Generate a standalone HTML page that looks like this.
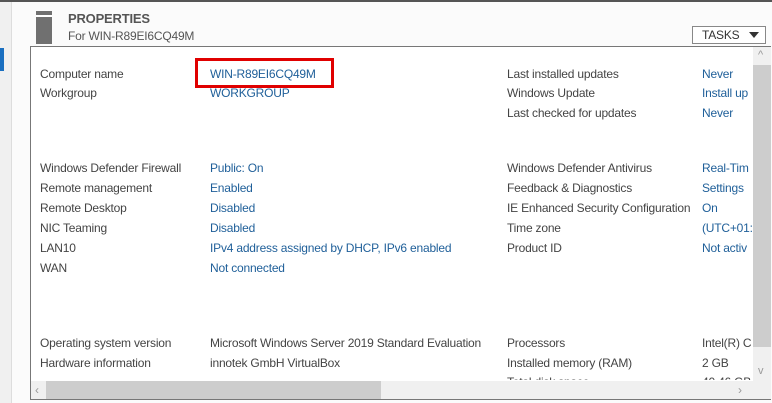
<!DOCTYPE html>
<html><head><style>
body{margin:0;width:772px;height:403px;overflow:hidden;background:#fbfbfb;font-family:"Liberation Sans",sans-serif;position:relative}
.t{position:absolute;font-size:12px;color:#444;white-space:nowrap;letter-spacing:-0.2px}
.v{color:#1f5f99}
</style></head><body>
<div style="position:absolute;left:0;top:0;width:772px;height:2px;background:#555"></div>
<div style="position:absolute;left:0;top:2px;width:11px;height:401px;background:#f0f0f0;border-right:1px solid #ddd"></div>
<div style="position:absolute;left:0;top:48px;width:4px;height:23px;background:#1a6fc0"></div>
<div style="position:absolute;left:36px;top:11px;width:16px;height:33px;background:#707070"></div>
<div style="position:absolute;left:36px;top:15px;width:16px;height:2px;background:#fff"></div>
<div class="t" style="left:68px;top:11px;font-size:13px;font-weight:bold;color:#555">PROPERTIES</div>
<div class="t" style="left:68px;top:29px;color:#555">For WIN-R89EI6CQ49M</div>
<div style="position:absolute;left:692px;top:26px;width:72px;height:16px;border:1px solid #888;background:#fff"></div>
<div class="t" style="left:702px;top:28px;color:#333">TASKS</div>
<div style="position:absolute;left:749px;top:32px;width:0;height:0;border-left:5px solid transparent;border-right:5px solid transparent;border-top:6px solid #333"></div>
<div style="position:absolute;left:30px;top:46px;width:740px;height:352px;border:1px solid #777;border-right:none;background:#fff;overflow:hidden">
 <div style="position:absolute;left:722px;top:0;width:18px;height:334px;background:#f0f0f0"></div>
 <div style="position:absolute;left:722px;top:18px;width:18px;height:282px;background:#cdcdcd"></div>
 <div class="t" style="left:727px;top:2px;color:#999;font-size:11px">^</div>
 <div class="t" style="left:727px;top:318px;color:#999;font-size:11px">v</div>
 <div style="position:absolute;left:0;top:334px;width:740px;height:18px;background:#f0f0f0"></div>
 <div style="position:absolute;left:15px;top:334px;width:335px;height:18px;background:#cdcdcd"></div>
 <div class="t" style="left:4px;top:336px;color:#999">‹</div>
 <div class="t" style="left:707px;top:336px;color:#999">›</div>
</div>
<div style="position:absolute;left:195px;top:58px;width:133px;height:24px;border:3px solid #e00000"></div>
<div class="t" style="left:40px;top:67px">Computer name</div><div class="t v" style="left:210px;top:67px">WIN-R89EI6CQ49M</div>
<div class="t" style="left:40px;top:86px">Workgroup</div><div class="t v" style="left:210px;top:86px">WORKGROUP</div>
<div class="t" style="left:507px;top:67px">Last installed updates</div><div class="t v" style="left:702px;top:67px">Never</div>
<div class="t" style="left:507px;top:86px">Windows Update</div><div class="t v" style="left:702px;top:86px">Install up</div>
<div class="t" style="left:507px;top:106px">Last checked for updates</div><div class="t v" style="left:702px;top:106px">Never</div>
<div class="t" style="left:40px;top:161px">Windows Defender Firewall</div><div class="t v" style="left:210px;top:161px">Public: On</div>
<div class="t" style="left:40px;top:181px">Remote management</div><div class="t v" style="left:210px;top:181px">Enabled</div>
<div class="t" style="left:40px;top:201px">Remote Desktop</div><div class="t v" style="left:210px;top:201px">Disabled</div>
<div class="t" style="left:40px;top:221px">NIC Teaming</div><div class="t v" style="left:210px;top:221px">Disabled</div>
<div class="t" style="left:40px;top:241px">LAN10</div><div class="t v" style="left:210px;top:241px">IPv4 address assigned by DHCP, IPv6 enabled</div>
<div class="t" style="left:40px;top:261px">WAN</div><div class="t v" style="left:210px;top:261px">Not connected</div>
<div class="t" style="left:507px;top:161px">Windows Defender Antivirus</div><div class="t v" style="left:702px;top:161px">Real-Tim</div>
<div class="t" style="left:507px;top:181px">Feedback &amp; Diagnostics</div><div class="t v" style="left:702px;top:181px">Settings</div>
<div class="t" style="left:507px;top:201px">IE Enhanced Security Configuration</div><div class="t v" style="left:702px;top:201px">On</div>
<div class="t" style="left:507px;top:221px">Time zone</div><div class="t v" style="left:702px;top:221px">(UTC+01:</div>
<div class="t" style="left:507px;top:241px">Product ID</div><div class="t v" style="left:702px;top:241px">Not activ</div>
<div class="t" style="left:40px;top:336px">Operating system version</div><div class="t" style="left:210px;top:336px">Microsoft Windows Server 2019 Standard Evaluation</div>
<div class="t" style="left:40px;top:356px">Hardware information</div><div class="t" style="left:210px;top:356px">innotek GmbH VirtualBox</div>
<div class="t" style="left:507px;top:336px">Processors</div><div class="t" style="left:702px;top:336px">Intel(R) C</div>
<div class="t" style="left:507px;top:356px">Installed memory (RAM)</div><div class="t" style="left:702px;top:356px">2 GB</div>
<div style="position:absolute;left:31px;top:373px;width:721px;height:7px;overflow:hidden;background:#fff">
 <div class="t" style="left:476px;top:2px">Total disk space</div><div class="t" style="left:671px;top:2px">40.46 GB</div>
</div>
</body></html>
